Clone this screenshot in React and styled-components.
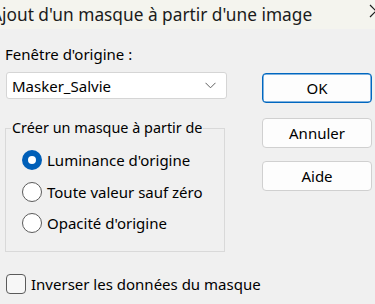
import React from 'react';
import styled, { createGlobalStyle } from 'styled-components';

const GlobalStyle = createGlobalStyle`
  html, body {
    margin: 0;
    padding: 0;
    background: #f0f0f0;
  }
  * {
    box-sizing: border-box;
  }
`;

const Dialog = styled.div`
  width: 375px;
  height: 304px;
  overflow: hidden;
  background: #f0f0f0;
  font-family: "Noto Sans", "Open Sans", sans-serif;
  font-size: 15px;
  color: #000;
`;

const TitleBar = styled.div`
  height: 29px;
  background: #f4f4ee;
  display: flex;
  align-items: center;
  justify-content: space-between;
  overflow: hidden;
`;

const Title = styled.span`
  margin-left: -9px;
  font-size: 17.3px;
  color: #1b1b1b;
  white-space: nowrap;
`;

const CloseIcon = styled.svg`
  margin-right: -8px;
  margin-top: -8px;
  flex: none;
`;

const Body = styled.div`
  display: grid;
  grid-template-columns: 226px 1fr;
  column-gap: 31px;
  padding: 0 4px 0 5px;
`;

const LeftColumn = styled.div`
  display: flex;
  flex-direction: column;
`;

const RightColumn = styled.div`
  display: flex;
  flex-direction: column;
  padding-top: 44px;
`;

const Label = styled.div`
  margin-top: 15px;
  line-height: 20px;
`;

const Select = styled.div`
  margin-top: 8px;
  margin-left: 1px;
  height: 27px;
  width: 221px;
  background: #fff;
  border: 1px solid #d5d5d5;
  border-radius: 3px;
  display: flex;
  align-items: center;
  justify-content: space-between;
  padding: 0 10px 0 5px;
`;

const GroupBox = styled.fieldset`
  margin: 19px 0 0 0;
  min-width: 0;
  width: 220px;
  height: 134px;
  border: 1px solid #d9d9d9;
  padding: 12px 0 0 16px;
  display: flex;
  flex-direction: column;
  gap: 11.5px;
`;

const Legend = styled.legend`
  padding: 0 1px;
  margin-left: -11px;
  line-height: 20px;
  font-size: 14.4px;
  white-space: nowrap;
`;

const OptionRow = styled.label`
  display: flex;
  align-items: center;
  gap: 5px;
  height: 20px;
  line-height: 20px;
  white-space: nowrap;
`;

const Radio = styled.span`
  width: 20px;
  height: 20px;
  border-radius: 50%;
  flex: none;
  border: ${p => (p.$checked ? '6px solid #005fb8' : '1px solid #5b5b5b')};
  background: #fff;
`;

const CheckRow = styled.label`
  margin-top: 22px;
  margin-left: 1px;
  display: flex;
  align-items: center;
  gap: 5px;
  height: 20px;
  width: 300px;
  white-space: nowrap;
`;

const CheckBox = styled.span`
  width: 20px;
  height: 20px;
  flex: none;
  border: 1px solid #5b5b5b;
  border-radius: 4px;
  background: #f7f7f7;
`;

const Button = styled.button`
  width: 110px;
  height: 30px;
  margin-top: ${p => p.$gap}px;
  font-family: inherit;
  font-size: 15px;
  color: #000;
  background: #fdfdfd;
  border: 1px solid ${p => (p.$primary ? '#0067c0' : '#d0d0d0')};
  box-shadow: ${p => (p.$primary ? 'inset 0 0 0 0.5px #0067c0' : 'none')};
  border-radius: 4px;
  padding: 0;
`;

const App = () => {
  return (
    <Dialog>
      <GlobalStyle />
      <TitleBar>
        <Title>Ajout d'un masque à partir d'une image</Title>
        <CloseIcon width="14" height="14" viewBox="0 0 14 14">
          <path d="M1 1 L13 13 M13 1 L1 13" stroke="#1b1b1b" strokeWidth="1.2" fill="none" />
        </CloseIcon>
      </TitleBar>
      <Body>
        <LeftColumn>
          <Label>Fenêtre d'origine :</Label>
          <Select>
            <span>Masker_Salvie</span>
            <svg width="11" height="7" viewBox="0 0 11 7">
              <path d="M0.5 0.8 L5.5 5.8 L10.5 0.8" stroke="#606060" strokeWidth="1" fill="none" />
            </svg>
          </Select>
          <GroupBox>
            <Legend>Créer un masque à partir de</Legend>
            <OptionRow>
              <Radio $checked />
              Luminance d'origine
            </OptionRow>
            <OptionRow>
              <Radio />
              Toute valeur sauf zéro
            </OptionRow>
            <OptionRow>
              <Radio />
              Opacité d'origine
            </OptionRow>
          </GroupBox>
          <CheckRow>
            <CheckBox />
            Inverser les données du masque
          </CheckRow>
        </LeftColumn>
        <RightColumn>
          <Button $primary $gap={0}>OK</Button>
          <Button $gap={15}>Annuler</Button>
          <Button $gap={13}>Aide</Button>
        </RightColumn>
      </Body>
    </Dialog>
  );
};

export default App;
